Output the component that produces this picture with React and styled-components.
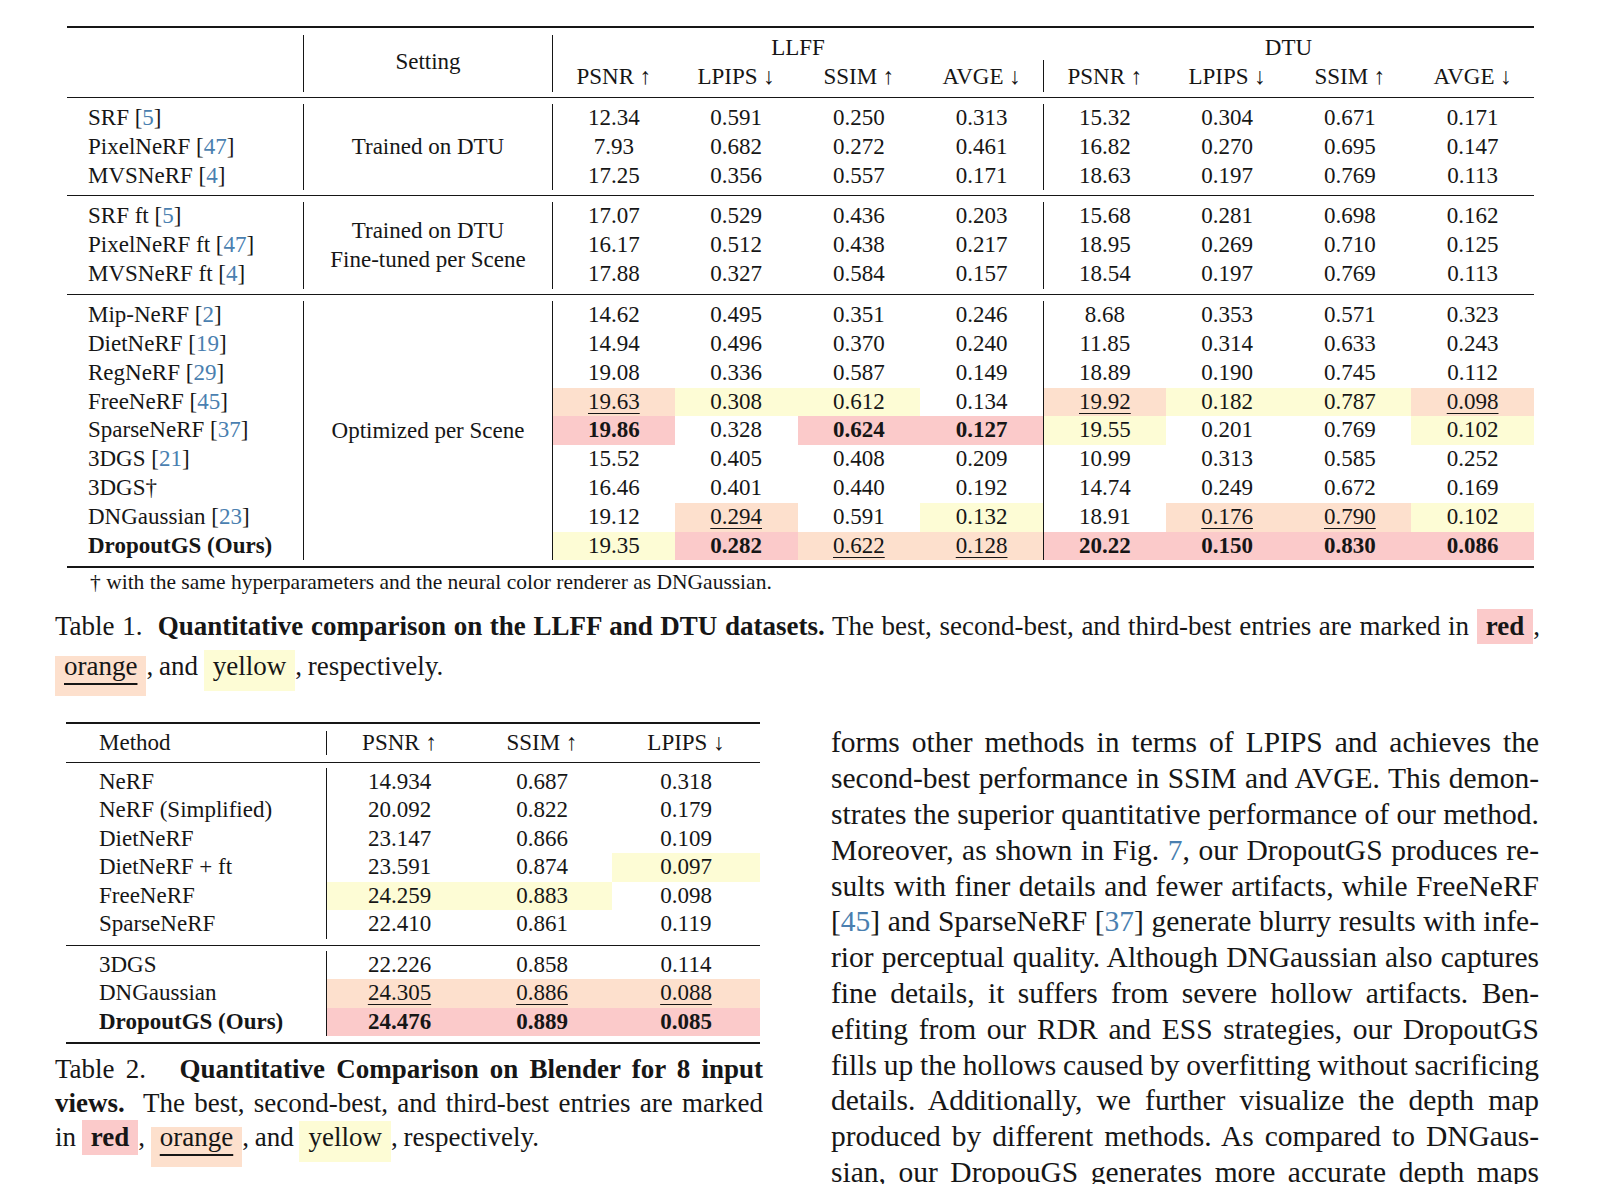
import React from "react";
import styled, { createGlobalStyle } from "styled-components";

const GlobalStyle = createGlobalStyle`
  html, body {
    margin: 0;
    padding: 0;
    background: #ffffff;
  }
  body {
    font-family: "Liberation Serif", "Times New Roman", Times, serif;
    color: #161616;
    overflow: hidden;
  }
`;

const INK = "#161616";
const CITE = "#4a7fb0";
const HL = { r: "#fbcaca", o: "#fde0cd", y: "#fdfcd5" };

// padding of the coloured boxes in the captions (LaTeX \colorbox hugs the glyphs)
const BOX = {
  r: { top: 7, bottom: 6.7 },
  o: { top: 0, bottom: 18.2 },
  y: { top: 6, bottom: 13.2 },
};

const Page = styled.div`
  width: 1485px;
  padding: 26px 0 0 55px;
`;

const TableWrap = styled.div`
  margin-left: ${(p) => p.$indent}px;
`;

const DataTable = styled.table`
  width: ${(p) => p.$width}px;
  table-layout: fixed;
  border-collapse: separate;
  border-spacing: 0;
  font-size: 23px;
`;

const RuleCell = styled.td`
  padding: ${(p) => p.$above}px 0 ${(p) => p.$below}px;
  line-height: 0;
  font-size: 0;
`;

const RuleLine = styled.div`
  height: ${(p) => p.$thick}px;
  background: ${INK};
`;

const HeadCell = styled.th`
  padding: 0 0 ${(p) => p.$lift || 0}px ${(p) => p.$pad || 0}px;
  height: ${(p) => p.$h}px;
  font-weight: 400;
  line-height: 1;
  text-align: ${(p) => (p.$left ? "left" : "center")};
  vertical-align: middle;
  border-left: ${(p) => (p.$rule ? `1px solid ${INK}` : "none")};
  white-space: nowrap;
`;

const NameCell = styled.td`
  padding: 0 0 0 ${(p) => p.$pad}px;
  height: ${(p) => p.$h}px;
  line-height: ${(p) => p.$h}px;
  white-space: nowrap;
  font-weight: ${(p) => (p.$bold ? 700 : 400)};
`;

const SettingCell = styled.td`
  padding: 0;
  text-align: center;
  vertical-align: middle;
  border-left: 1px solid ${INK};
  line-height: 28.6px;
  white-space: nowrap;
`;

const ValueCell = styled.td`
  padding: 0;
  height: ${(p) => p.$h}px;
  line-height: ${(p) => p.$h}px;
  text-align: center;
  background: ${(p) => (p.$rank ? HL[p.$rank] : "transparent")};
  border-left: ${(p) => (p.$rule ? `1px solid ${INK}` : "none")};
`;

const Score = styled.span`
  font-weight: ${(p) => (p.$rank === "r" ? 700 : 400)};
  text-decoration: ${(p) => (p.$rank === "o" ? "underline" : "none")};
  text-decoration-thickness: 1px;
  text-underline-offset: 4px;
`;

const CiteNum = styled.span`
  color: ${CITE};
`;

const Footnote = styled.div`
  margin: 2px 0 0 35px;
  font-size: 21.5px;
  line-height: 24px;
`;

const Caption = styled.div`
  margin-top: ${(p) => p.$mt}px;
  font-size: 27px;
`;

const TextLine = styled.div`
  height: ${(p) => p.$lh}px;
  line-height: ${(p) => p.$lh}px;
  text-align: ${(p) => (p.$last ? "left" : "justify")};
  text-align-last: ${(p) => (p.$last ? "left" : "justify")};
  word-spacing: ${(p) => p.$squeeze ?? -1}px;
`;

const ColorBox = styled.span`
  display: inline-block;
  background: ${(p) => HL[p.$kind]};
  padding: ${(p) => BOX[p.$kind].top}px 9px ${(p) => BOX[p.$kind].bottom}px;
  line-height: 21.8px;
  word-spacing: normal;
  font-weight: ${(p) => (p.$kind === "r" ? 700 : 400)};
  text-decoration: ${(p) => (p.$kind === "o" ? "underline" : "none")};
  text-decoration-thickness: 1.5px;
  text-underline-offset: 8px;
`;

const Columns = styled.div`
  display: grid;
  grid-template-columns: 708px 708px;
  column-gap: 68px;
  align-items: start;
  margin-top: 36px;
`;

const Column = styled.div`
  padding-top: ${(p) => p.$top || 0}px;
`;

const Prose = styled.div`
  font-size: 29.5px;
`;

const Cite = ({ n }) => (
  <>
    {" "}[<CiteNum>{n}</CiteNum>]
  </>
);

const parse = (s) => {
  const m = s.match(/^(.*?)([roy])?$/);
  return { text: m[1], rank: m[2] };
};

const Rule = ({ cols, thick = 1, above, below }) => (
  <tr>
    <RuleCell colSpan={cols} $above={above} $below={below}>
      <RuleLine $thick={thick} />
    </RuleCell>
  </tr>
);

const mainGroups = [
  {
    setting: ["Trained on DTU"],
    rows: [
      ["SRF", "5", ["12.34", "0.591", "0.250", "0.313", "15.32", "0.304", "0.671", "0.171"]],
      ["PixelNeRF", "47", ["7.93", "0.682", "0.272", "0.461", "16.82", "0.270", "0.695", "0.147"]],
      ["MVSNeRF", "4", ["17.25", "0.356", "0.557", "0.171", "18.63", "0.197", "0.769", "0.113"]],
    ],
  },
  {
    setting: ["Trained on DTU", "Fine-tuned per Scene"],
    rows: [
      ["SRF ft", "5", ["17.07", "0.529", "0.436", "0.203", "15.68", "0.281", "0.698", "0.162"]],
      ["PixelNeRF ft", "47", ["16.17", "0.512", "0.438", "0.217", "18.95", "0.269", "0.710", "0.125"]],
      ["MVSNeRF ft", "4", ["17.88", "0.327", "0.584", "0.157", "18.54", "0.197", "0.769", "0.113"]],
    ],
  },
  {
    setting: ["Optimized per Scene"],
    rows: [
      ["Mip-NeRF", "2", ["14.62", "0.495", "0.351", "0.246", "8.68", "0.353", "0.571", "0.323"]],
      ["DietNeRF", "19", ["14.94", "0.496", "0.370", "0.240", "11.85", "0.314", "0.633", "0.243"]],
      ["RegNeRF", "29", ["19.08", "0.336", "0.587", "0.149", "18.89", "0.190", "0.745", "0.112"]],
      ["FreeNeRF", "45", ["19.63o", "0.308y", "0.612y", "0.134", "19.92o", "0.182y", "0.787y", "0.098o"]],
      ["SparseNeRF", "37", ["19.86r", "0.328", "0.624r", "0.127r", "19.55y", "0.201", "0.769", "0.102y"]],
      ["3DGS", "21", ["15.52", "0.405", "0.408", "0.209", "10.99", "0.313", "0.585", "0.252"]],
      ["3DGS\u2020", null, ["16.46", "0.401", "0.440", "0.192", "14.74", "0.249", "0.672", "0.169"]],
      ["DNGaussian", "23", ["19.12", "0.294o", "0.591", "0.132y", "18.91", "0.176o", "0.790o", "0.102y"]],
      ["DropoutGS (Ours)", null, ["19.35y", "0.282r", "0.622o", "0.128o", "20.22r", "0.150r", "0.830r", "0.086r"], true],
    ],
  },
];

const blenderGroups = [
  [
    ["NeRF", "14.934", "0.687", "0.318"],
    ["NeRF (Simplified)", "20.092", "0.822", "0.179"],
    ["DietNeRF", "23.147", "0.866", "0.109"],
    ["DietNeRF + ft", "23.591", "0.874", "0.097y"],
    ["FreeNeRF", "24.259y", "0.883y", "0.098"],
    ["SparseNeRF", "22.410", "0.861", "0.119"],
  ],
  [
    ["3DGS", "22.226", "0.858", "0.114"],
    ["DNGaussian", "24.305o", "0.886o", "0.088o"],
    ["DropoutGS (Ours)", "24.476r", "0.889r", "0.085r", true],
  ],
];

const metrics = ["PSNR \u2191", "LPIPS \u2193", "SSIM \u2191", "AVGE \u2193"];

const ScoreCell = ({ value, h, rule }) => {
  const { text, rank } = parse(value);
  return (
    <ValueCell $h={h} $rank={rank} $rule={rule}>
      <Score $rank={rank}>{text}</Score>
    </ValueCell>
  );
};

const MainTable = () => (
  <TableWrap $indent={12}>
    <DataTable $width={1467}>
      <colgroup>
        <col style={{ width: 236 }} />
        <col style={{ width: 249 }} />
        {Array.from({ length: 8 }).map((_, i) => (
          <col key={i} style={{ width: 122.75 }} />
        ))}
      </colgroup>
      <tbody>
        <Rule cols={10} thick={2} above={0} below={7} />
        <tr>
          <HeadCell rowSpan={2} $h={25} />
          <HeadCell rowSpan={2} $h={25} $rule $lift={4}>
            Setting
          </HeadCell>
          <HeadCell colSpan={4} $h={25} $rule>
            LLFF
          </HeadCell>
          <HeadCell colSpan={4} $h={25}>
            DTU
          </HeadCell>
        </tr>
        <tr>
          {[...metrics, ...metrics].map((m, i) => (
            <HeadCell key={i} $h={32} $rule={i === 0 || i === 4}>
              {m}
            </HeadCell>
          ))}
        </tr>
        <Rule cols={10} above={5} below={6} />
        {mainGroups.map((group, gi) => (
          <React.Fragment key={gi}>
            {group.rows.map(([name, cite, values, ours], ri) => (
              <tr key={name}>
                <NameCell $pad={21} $h={28.8} $bold={ours}>
                  {name}
                  {cite && <Cite n={cite} />}
                </NameCell>
                {ri === 0 && (
                  <SettingCell rowSpan={group.rows.length}>
                    {group.setting.map((line) => (
                      <div key={line}>{line}</div>
                    ))}
                  </SettingCell>
                )}
                {values.map((v, vi) => (
                  <ScoreCell key={vi} value={v} h={28.8} rule={vi === 0 || vi === 4} />
                ))}
              </tr>
            ))}
            {gi < mainGroups.length - 1 ? (
              <Rule cols={10} above={5} below={gi === 0 ? 6 : 6.5} />
            ) : (
              <Rule cols={10} thick={2} above={5.5} below={0} />
            )}
          </React.Fragment>
        ))}
      </tbody>
    </DataTable>
  </TableWrap>
);

const BlenderTable = () => (
  <TableWrap $indent={11}>
    <DataTable $width={694}>
      <colgroup>
        <col style={{ width: 260 }} />
        <col style={{ width: 146 }} />
        <col style={{ width: 140 }} />
        <col style={{ width: 148 }} />
      </colgroup>
      <tbody>
        <Rule cols={4} thick={2} above={0} below={7} />
        <tr>
          <HeadCell $h={24} $left $pad={33}>
            Method
          </HeadCell>
          <HeadCell $h={24} $rule>
            PSNR ↑
          </HeadCell>
          <HeadCell $h={24}>SSIM ↑</HeadCell>
          <HeadCell $h={24}>LPIPS ↓</HeadCell>
        </tr>
        <Rule cols={4} above={7} below={5} />
        {blenderGroups.map((group, gi) => (
          <React.Fragment key={gi}>
            {group.map(([name, psnr, ssim, lpips, ours]) => (
              <tr key={name}>
                <NameCell $pad={33} $h={28.5} $bold={ours}>
                  {name}
                </NameCell>
                <ScoreCell value={psnr} h={28.5} rule />
                <ScoreCell value={ssim} h={28.5} />
                <ScoreCell value={lpips} h={28.5} />
              </tr>
            ))}
            {gi === 0 ? (
              <Rule cols={4} above={6} below={5} />
            ) : (
              <Rule cols={4} thick={2} above={5.5} below={0} />
            )}
          </React.Fragment>
        ))}
      </tbody>
    </DataTable>
  </TableWrap>
);

const proseLines = [
  <>forms other methods in terms of LPIPS and achieves the</>,
  <>second-best performance in SSIM and AVGE. This demon-</>,
  <>strates the superior quantitative performance of our method.</>,
  <>
    Moreover, as shown in Fig. <CiteNum>7</CiteNum>, our DropoutGS produces re-
  </>,
  <>sults with finer details and fewer artifacts, while FreeNeRF</>,
  <>
    [<CiteNum>45</CiteNum>] and SparseNeRF [<CiteNum>37</CiteNum>] generate blurry results with infe-
  </>,
  <>rior perceptual quality. Although DNGaussian also captures</>,
  <>fine details, it suffers from severe hollow artifacts. Ben-</>,
  <>efiting from our RDR and ESS strategies, our DropoutGS</>,
  <>fills up the hollows caused by overfitting without sacrificing</>,
  <>details. Additionally, we further visualize the depth map</>,
  <>produced by different methods. As compared to DNGaus-</>,
  <>sian, our DropouGS generates more accurate depth maps</>,
];

const App = () => (
  <>
    <GlobalStyle />
    <Page>
      <MainTable />
      <Footnote>† with the same hyperparameters and the neural color renderer as DNGaussian.</Footnote>

      <Caption $mt={12}>
        <TextLine $lh={40}>
          Table 1.&nbsp; <b>Quantitative comparison on the LLFF and DTU datasets.</b> The best,
          second-best, and third-best entries are marked in <ColorBox $kind="r">red</ColorBox>,
        </TextLine>
        <TextLine $lh={40} $last>
          <ColorBox $kind="o">orange</ColorBox>, and <ColorBox $kind="y">yellow</ColorBox>,
          respectively.
        </TextLine>
      </Caption>

      <Columns>
        <Column>
          <BlenderTable />
          <Caption $mt={9.3}>
            <TextLine $lh={33.3}>
              Table 2.&nbsp;&nbsp; <b>Quantitative Comparison on Blender for 8 input</b>
            </TextLine>
            <TextLine $lh={33.3}>
              <b>views.</b>&nbsp; The best, second-best, and third-best entries are marked
            </TextLine>
            <TextLine $lh={33.3} $last>
              in <ColorBox $kind="r">red</ColorBox>, <ColorBox $kind="o">orange</ColorBox>, and{" "}
              <ColorBox $kind="y">yellow</ColorBox>, respectively.
            </TextLine>
          </Caption>
        </Column>
        <Column $top={3.4}>
          <Prose>
            {proseLines.map((line, i) => (
              <TextLine key={i} $lh={35.8} $squeeze={-3.5}>
                {line}
              </TextLine>
            ))}
          </Prose>
        </Column>
      </Columns>
    </Page>
  </>
);

export default App;
